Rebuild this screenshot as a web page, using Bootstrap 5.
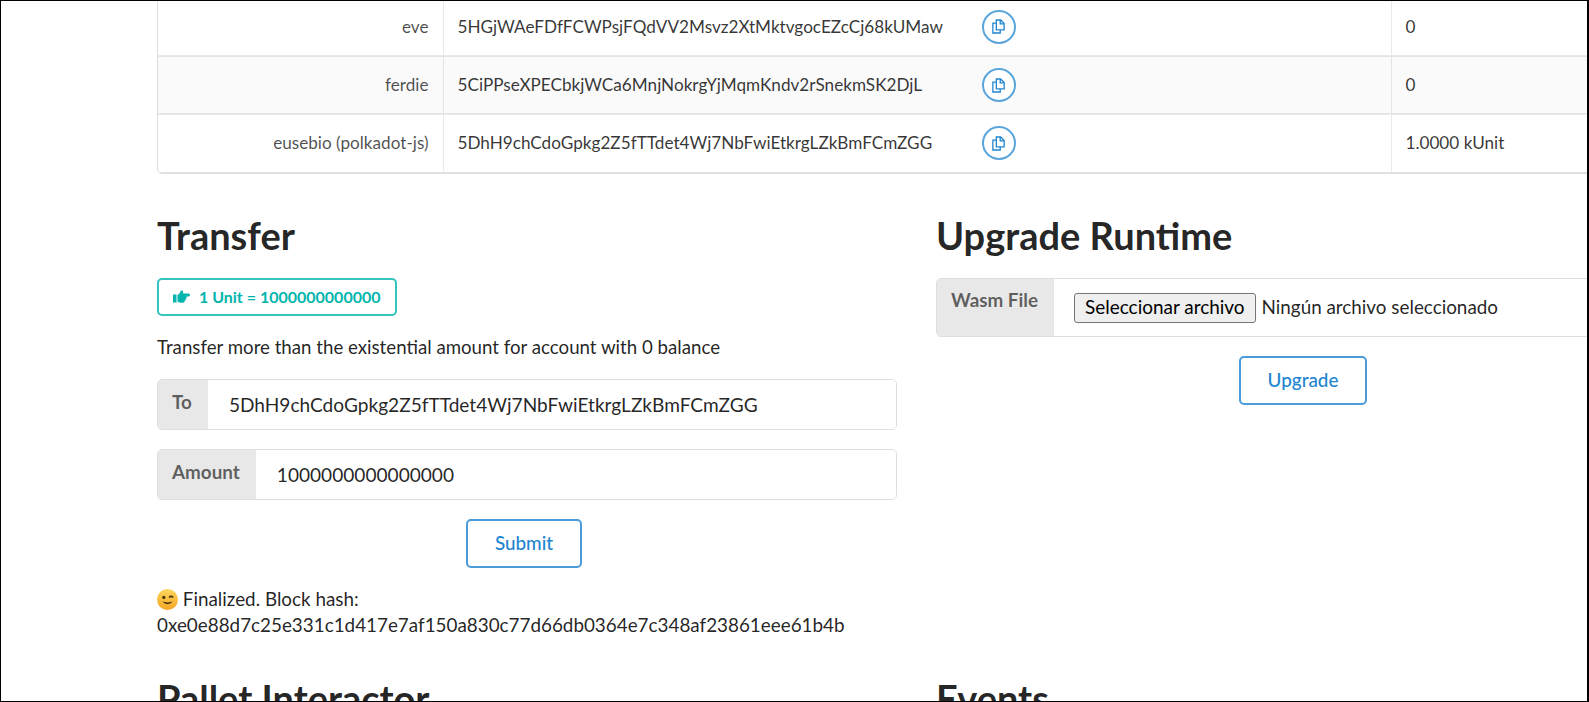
<!DOCTYPE html>
<html lang="es">
<head>
<meta charset="utf-8">
<title>Substrate Front End</title>
<link href="https://cdn.jsdelivr.net/npm/bootstrap@5.3.0/dist/css/bootstrap.min.css" rel="stylesheet">
<style>
html,body{height:100%;overflow:hidden}
body{background:#fff;font-family:Lato,"Liberation Sans",sans-serif;font-size:18.85px;color:rgba(0,0,0,.87)}
.viewport-frame{height:702px;overflow:hidden;border:1px solid #000;border-right-width:2px}
.page-wrap{width:1519px;margin-left:156px;margin-top:-3px}
.acct-wrap{border:1px solid rgba(34,36,38,.15);border-top:0;border-radius:0 0 5px 5px;overflow:hidden;margin-bottom:39px}
.acct-table{width:100%;margin:0;border-collapse:collapse;table-layout:fixed;line-height:22px;font-size:17.15px}
.acct-table td{height:58px;padding:0 14px;vertical-align:middle;border-top:2px solid rgba(34,36,38,.1);border-left:1px solid rgba(34,36,38,.1);background:transparent;color:rgba(0,0,0,.8)}
.acct-table tr:first-child td{border-top:0}
.acct-table td:first-child{border-left:0;width:285px;text-align:right;color:rgba(0,0,0,.7)}
.acct-table td.addr-cell{width:948px}
.acct-table tr.alt td{background:rgba(0,0,50,.02)}
.addr-flex{display:flex;align-items:center}
.addr-text{width:524px;flex:none}
.copy-btn{width:34px;height:34px;padding:0;border:2px solid #5aa5dc;border-radius:50%;background:#fff;color:#2185d0;flex:none}
.copy-btn svg{width:13px;height:15px;display:block;margin:auto}
.two-cols{display:grid;grid-template-columns:740px 740px;column-gap:39px}
.sect-title{font-family:Lato,"Liberation Sans",sans-serif;font-weight:700;font-size:38px;line-height:44px;margin:0 0 21px;color:rgba(0,0,0,.87)}
.unit-tag{display:inline-flex;align-items:center;gap:9px;height:38px;padding:0 14px;border:2px solid #33c4bd;border-radius:5px;color:#00b5ad;font-weight:700;font-size:16px;background:#fff}
.unit-tag svg{width:17px;height:13px}
.hint-line{margin:0;padding-top:20px;line-height:22px;margin-bottom:21px;font-size:18.68px}
.field-row{height:51px;margin-bottom:19px;border:1px solid rgba(34,36,38,.15);border-radius:5px;display:flex;overflow:hidden}
.field-lab{background:#e8e8e8;color:rgba(0,0,0,.6);font-weight:700;padding:13px 16px 0 15px;display:flex;align-items:flex-start;line-height:20px;margin:-1px 0 -1px -1px}
.field-input{flex:1;border:0;outline:0;padding:0 0 0 21px;font:19.1px Lato,"Liberation Sans",sans-serif;color:rgba(0,0,0,.87);min-width:0;background:#fff}
.wasm-row{height:59px;margin-bottom:19px;align-items:flex-start}
.wasm-row .field-lab{padding:12px 16px 0 15px;align-self:stretch}
.file-pick{display:flex;align-items:center;gap:6px;padding:14px 0 0 20px}
.file-btn{height:30px;padding:0 10px;border:1px solid #767676;border-radius:3px;background:#efefef;color:#000;font:18.95px/1 Lato,"Liberation Sans",sans-serif}
.action-box{display:flex;justify-content:center;padding-right:6px}
.act-btn{height:49px;border:2px solid #4a9bd8;border-radius:5px;background:#fff;color:#2185d0;font-size:18.85px;padding:0 27px;font-family:Lato,"Liberation Sans",sans-serif;font-weight:500}
.status-line{margin:18px 0 0;line-height:26px;height:52px}
.status-line svg{width:21px;height:21px;vertical-align:-4px}
.low-title{margin-top:38px}
.events-title{margin-top:271px}
</style>
</head>
<body>
<div class="viewport-frame">
<div class="page-wrap">
  <div class="acct-wrap">
    <table class="table acct-table">
      <tbody>
        <tr><td>eve</td><td class="addr-cell"><div class="addr-flex"><span class="addr-text">5HGjWAeFDfFCWPsjFQdVV2Msvz2XtMktvgocEZcCj68kUMaw</span><button class="copy-btn" type="button" aria-label="copy"><svg viewBox="0 0 15 17" fill="none" stroke="currentColor" stroke-width="1.5"><path d="M5 3.500V1h5l4 4v7.500H5z"/><path d="M9.500 1v4.500H14"/><path d="M5 4.500H1V16h8.500v-3.500"/></svg></button></div></td><td>0</td></tr>
        <tr class="alt"><td>ferdie</td><td class="addr-cell"><div class="addr-flex"><span class="addr-text">5CiPPseXPECbkjWCa6MnjNokrgYjMqmKndv2rSnekmSK2DjL</span><button class="copy-btn" type="button" aria-label="copy"><svg viewBox="0 0 15 17" fill="none" stroke="currentColor" stroke-width="1.5"><path d="M5 3.500V1h5l4 4v7.500H5z"/><path d="M9.500 1v4.500H14"/><path d="M5 4.500H1V16h8.500v-3.500"/></svg></button></div></td><td>0</td></tr>
        <tr><td>eusebio (polkadot-js)</td><td class="addr-cell"><div class="addr-flex"><span class="addr-text">5DhH9chCdoGpkg2Z5fTTdet4Wj7NbFwiEtkrgLZkBmFCmZGG</span><button class="copy-btn" type="button" aria-label="copy"><svg viewBox="0 0 15 17" fill="none" stroke="currentColor" stroke-width="1.5"><path d="M5 3.500V1h5l4 4v7.500H5z"/><path d="M9.500 1v4.500H14"/><path d="M5 4.500H1V16h8.500v-3.500"/></svg></button></div></td><td>1.0000 kUnit</td></tr>
      </tbody>
    </table>
  </div>
  <div class="two-cols">
    <section>
      <h1 class="sect-title">Transfer</h1>
      <div class="unit-tag"><svg viewBox="0 0 17 13" fill="currentColor"><path d="M0 4.500h3.500V12.500H0zM4.500 5 6.500 3.500 8 .5c1.500-.5 2.600.6 2.200 2L9.800 3.500H15.500c2 0 2 3 0 3H13.500c.4 1 .1 2-.8 2.400.2 1.100-.3 1.800-1.100 2 .1 1-.5 1.800-1.600 1.800H7.500c-1.300 0-2-.5-3-1.200z"/></svg><span>1 Unit = 1000000000000</span></div>
      <p class="hint-line">Transfer more than the existential amount for account with 0 balance</p>
      <div class="field-row"><label class="field-lab">To</label><input class="field-input" value="5DhH9chCdoGpkg2Z5fTTdet4Wj7NbFwiEtkrgLZkBmFCmZGG"></div>
      <div class="field-row"><label class="field-lab">Amount</label><input class="field-input" value="1000000000000000"></div>
      <div class="action-box"><button class="act-btn" type="button">Submit</button></div>
      <p class="status-line"><svg viewBox="0 0 20 20"><defs><linearGradient id="fg" x1="0" y1="0" x2="0" y2="1"><stop offset="0" stop-color="#fdd75e"/><stop offset="1" stop-color="#f5a623"/></linearGradient></defs><circle cx="10" cy="10" r="10" fill="url(#fg)"/><circle cx="6.500" cy="8" r="1.500" fill="#4a3410"/><path d="M11.500 8q2-2 4 0" stroke="#4a3410" stroke-width="1.400" fill="none"/><path d="M5 12q5 5 10 0q-5 1.500-10 0z" fill="#4a3410"/></svg> Finalized. Block hash:<br>0xe0e88d7c25e331c1d417e7af150a830c77d66db0364e7c348af23861eee61b4b</p>
      <h1 class="sect-title low-title">Pallet Interactor</h1>
    </section>
    <section>
      <h1 class="sect-title">Upgrade Runtime</h1>
      <div class="field-row wasm-row"><label class="field-lab">Wasm File</label><div class="file-pick"><button class="file-btn" type="button">Seleccionar archivo</button><span>Ningún archivo seleccionado</span></div></div>
      <div class="action-box"><button class="act-btn" type="button">Upgrade</button></div>
      <h1 class="sect-title events-title">Events</h1>
    </section>
  </div>
</div>
</div>
<script src="https://cdn.jsdelivr.net/npm/bootstrap@5.3.0/dist/js/bootstrap.bundle.min.js"></script>
</body>
</html>
